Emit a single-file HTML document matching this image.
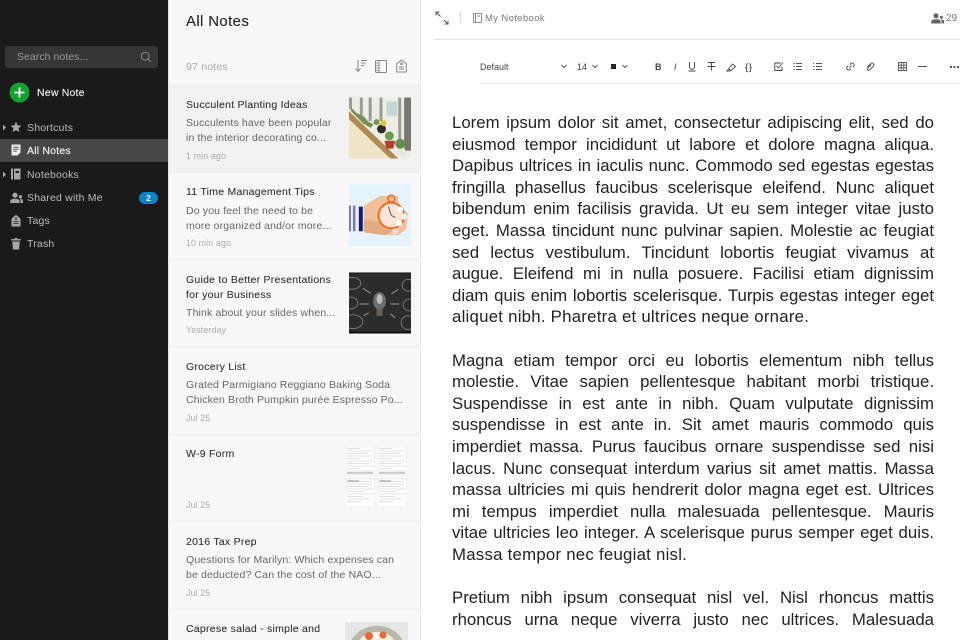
<!DOCTYPE html>
<html><head><meta charset="utf-8"><style>
html,body{margin:0;padding:0;width:960px;height:640px;overflow:hidden;background:#fff;font-family:"Liberation Sans",sans-serif}
.a{position:absolute;white-space:nowrap}
svg{position:absolute;overflow:hidden}
#side{position:absolute;left:0;top:0;width:168px;height:640px;background:#1a1a1a}
#list{position:absolute;left:169px;top:0;width:251px;height:640px;background:#f8f8f8}
.nav{font-size:10.5px;color:#bdbdbd;left:27px;line-height:14px;letter-spacing:.2px;margin-top:1px}
.t{font-size:10.5px;color:#333;left:186px;line-height:14px;letter-spacing:.25px;-webkit-text-stroke:.1px #333;margin-top:1px}
.p{font-size:10.5px;color:#666;left:186px;line-height:14px;letter-spacing:.15px;margin-top:1px}
.d{font-size:8.8px;color:#aaa;left:186px;line-height:12px;letter-spacing:.15px}
.div{position:absolute;left:169px;width:251px;height:1px;background:#ececec}
.l{position:absolute;left:452px;width:482px;height:21.6px;line-height:21.6px;margin-top:1px;font-size:16.8px;color:#222;text-align:justify;text-align-last:justify;overflow:hidden;white-space:normal}
.l.e{text-align-last:left;letter-spacing:.25px}
.tb{font-size:9px;color:#444;line-height:12px}
</style></head><body>
<div id="side"></div>
<div id="list"></div>
<div class="a" style="left:168px;top:0;width:1px;height:640px;background:#e2e2e2"></div>
<div class="a" style="left:420px;top:0;width:1px;height:640px;background:#eaeaea"></div>

<!-- sidebar -->
<div class="a" style="left:5px;top:46px;width:153px;height:22px;border-radius:3px;background:#363636"></div>
<div class="a" style="left:17px;top:50px;font-size:10.5px;line-height:14px;color:#9a9a9a;letter-spacing:.05px">Search notes...</div>
<svg style="left:140px;top:51px" width="12" height="12" viewBox="0 0 12 12" fill="none" stroke="#858585" stroke-width="1.1"><circle cx="5.2" cy="5.2" r="3.9"/><path d="M8 8l3 3"/></svg>
<svg style="left:9px;top:82px" width="21" height="21" viewBox="0 0 21 21"><circle cx="10.5" cy="10.5" r="10" fill="#12a32f"/><path d="M10.5 5.5v10M5.5 10.5h10" stroke="#fff" stroke-width="1.7"/></svg>
<div class="a" style="left:37px;top:86px;font-size:10.5px;line-height:14px;color:#eee;letter-spacing:.2px;-webkit-text-stroke:.15px #eee">New Note</div>

<div class="a" style="left:0;top:139px;width:168px;height:23px;background:#474747"></div>
<svg style="left:2px;top:124px" width="5" height="7" viewBox="0 0 5 7"><path d="M1 .5l3 3-3 3z" fill="#aaa"/></svg>
<svg style="left:2px;top:171px" width="5" height="7" viewBox="0 0 5 7"><path d="M1 .5l3 3-3 3z" fill="#aaa"/></svg>
<svg style="left:10px;top:121px" width="12" height="12" viewBox="0 0 12 12"><path d="M6 .8l1.6 3.5 3.8.4-2.8 2.6.8 3.8L6 9.2l-3.4 1.9.8-3.8L.6 4.700l3.800-.4z" fill="#a5a5a5"/></svg>
<svg style="left:11px;top:144px" width="10" height="12" viewBox="0 0 10 12"><path d="M.5.5h9v8l-3 3h-6z" fill="#eee"/><path d="M2.200 3.200h5.600M2.200 5.200h5.600M2.200 7.200h3.600" stroke="#474747" stroke-width=".9"/></svg>
<svg style="left:11px;top:168px" width="10" height="12" viewBox="0 0 10 12"><path d="M0 .5h2v11H0z" fill="#a5a5a5"/><path d="M3 .5h6.500v11H3z" fill="#a5a5a5"/><path d="M4.500 3h3.500v2H4.500z" fill="#1a1a1a"/></svg>
<svg style="left:10px;top:192px" width="13" height="12" viewBox="0 0 13 12"><circle cx="5" cy="3.200" r="2.600" fill="#a5a5a5"/><path d="M.3 11V8.800C.3 7.500 2 6.700 5 6.700s4.600.8 4.600 2.100V11z" fill="#a5a5a5"/><circle cx="10.400" cy="4.800" r="1.700" fill="#a5a5a5"/><path d="M10.500 11V8.600c0-.7-.2-1.200-.7-1.700 2-.1 3.200.6 3.200 1.800V11z" fill="#a5a5a5"/></svg>
<svg style="left:11px;top:214px" width="10" height="13" viewBox="0 0 10 13"><path d="M5 .8L9.500 4.600v7.900H.5V4.600z" fill="#a5a5a5"/><circle cx="5" cy="4.500" r="1" fill="#1a1a1a"/><path d="M2.500 7.500h5M2.500 9.500h5" stroke="#1a1a1a" stroke-width=".8"/></svg>
<svg style="left:11px;top:237px" width="10" height="13" viewBox="0 0 10 13"><path d="M3.800.8h2.400v1.200h3.500v1.500H.3V2h3.500z" fill="#a5a5a5"/><path d="M1.200 4.500h7.600l-.7 8H1.900z" fill="#a5a5a5"/></svg>
<div class="a nav" style="top:120px">Shortcuts</div>
<div class="a nav" style="top:143px;color:#f2f2f2;-webkit-text-stroke:.15px #f2f2f2">All Notes</div>
<div class="a nav" style="top:167px">Notebooks</div>
<div class="a nav" style="top:190px">Shared with Me</div>
<div class="a nav" style="top:213px">Tags</div>
<div class="a nav" style="top:236px">Trash</div>
<div class="a" style="left:139px;top:192px;width:19px;height:12px;border-radius:6px;background:#0a84c8;color:#fff;font-size:8.5px;font-weight:bold;line-height:12px;text-align:center">2</div>

<!-- list header -->
<div class="a" style="left:186px;top:13px;font-size:15px;line-height:18px;color:#222;letter-spacing:.35px;-webkit-text-stroke:.1px #222">All Notes</div>
<div class="a" style="left:186px;top:60px;font-size:10.5px;line-height:14px;color:#aaa;letter-spacing:.2px">97 notes</div>
<svg style="left:354px;top:59px" width="14" height="14" viewBox="0 0 14 14" fill="none" stroke="#888" stroke-width="1"><path d="M4 1v11M1.500 9.500L4 12.500l2.500-3M7 1.500h6M7 4h4.500M7 6.500h3"/></svg>
<svg style="left:375px;top:60px" width="12" height="13" viewBox="0 0 12 13" fill="none" stroke="#888" stroke-width="1"><rect x=".5" y=".5" width="11" height="12" rx="1"/><path d="M4 .5v12"/><path d="M.5 3h3M.5 5.500h3M.5 8h3M.5 10.500h3" stroke-width=".8"/></svg>
<svg style="left:396px;top:59px" width="11" height="14" viewBox="0 0 11 14" fill="none" stroke="#888" stroke-width="1"><path d="M5.500 1L10.300 4.800V13H.7V4.800z"/><circle cx="5.500" cy="4.800" r=".9"/><path d="M3 8h5M3 10h5"/></svg>

<!-- note rows -->
<div class="a" style="left:169px;top:85px;width:251px;height:87px;background:#f2f2f2"></div>
<div class="div" style="top:84px"></div><div class="div" style="top:172px"></div><div class="div" style="top:259px"></div><div class="div" style="top:346px"></div><div class="div" style="top:434px"></div><div class="div" style="top:521px"></div><div class="div" style="top:609px"></div>

<div class="a t" style="top:97px">Succulent Planting Ideas</div>
<div class="a p" style="top:115px">Succulents have been popular</div>
<div class="a p" style="top:130px">in the interior decorating co...</div>
<div class="a d" style="top:150px">1 min ago</div>

<div class="a t" style="top:184px">11 Time Management Tips</div>
<div class="a p" style="top:203px">Do you feel the need to be</div>
<div class="a p" style="top:218px">more organized and/or more...</div>
<div class="a d" style="top:237px">10 min ago</div>

<div class="a t" style="top:272px">Guide to Better Presentations</div>
<div class="a t" style="top:287px">for your Business</div>
<div class="a p" style="top:305px">Think about your slides when...</div>
<div class="a d" style="top:324px">Yesterday</div>

<div class="a t" style="top:359px">Grocery List</div>
<div class="a p" style="top:377px">Grated Parmigiano Reggiano Baking Soda</div>
<div class="a p" style="top:392px">Chicken Broth Pumpkin purée Espresso Po...</div>
<div class="a d" style="top:412px">Jul 25</div>

<div class="a t" style="top:446px">W-9 Form</div>
<div class="a d" style="top:499px">Jul 25</div>

<div class="a t" style="top:534px">2016 Tax Prep</div>
<div class="a p" style="top:552px">Questions for Marilyn: Which expenses can</div>
<div class="a p" style="top:567px">be deducted? Can the cost of the NAO...</div>
<div class="a d" style="top:587px">Jul 25</div>

<div class="a t" style="top:621px">Caprese salad - simple and</div>

<!-- thumbs -->
<svg style="left:349px;top:97px" width="62" height="62" viewBox="0 0 63 62">
<rect width="63" height="62" fill="#eceee6"/>
<path d="M0 18L46 62H0z" fill="#efe4c8"/>
<path d="M0 0h3v12H0zM11 0h3v18h-3zM20 0h3v24h-3zM31 0h3v24h-3z" fill="#9a9c94"/>
<rect x="38" y="4" width="11" height="15" fill="#c3d8d2"/>
<path d="M50 0h3v44h-3z" fill="#9a9c94"/><rect x="56" y="0" width="7" height="54" fill="#77776e"/>
<path d="M0 14L44 56l6 6h-8L0 22z" fill="#b08a52"/>
<path d="M2 10l6 6 7 3 5 6 5 2-3 4-8-5-6-6-6-6z" fill="#76904e"/>
<circle cx="33" cy="32" r="4.500" fill="#2e2c24"/><circle cx="35" cy="26" r="3" fill="#e3c33a"/><circle cx="28" cy="25" r="3" fill="#6f9450"/>
<path d="M36 44h11l-2 8H38z" fill="#b2402c"/><circle cx="41" cy="39" r="4.500" fill="#6c9a4c"/>
<path d="M49 52h8v7h-8z" fill="#ede7da"/><circle cx="52" cy="47" r="5" fill="#628e4a"/>
</svg>
<svg style="left:349px;top:184px" width="62" height="62" viewBox="0 0 63 63">
<rect width="63" height="63" fill="#e5f4fc"/>
<path d="M0 22h2v26H0zM4 22h2.500v26H4z" fill="#7a78bc"/><path d="M10 23h4v25h-4z" fill="#16167a"/>
<path d="M15 22L32 12h18v10l10 8-2 16-8 6H36l-21-3z" fill="#f0c098"/>
<path d="M15 36l22 4 8 8-9 4-21-3z" fill="#e4aa80"/>
<circle cx="43" cy="32" r="13" fill="#fce4d6" stroke="#ee6a24" stroke-width="2"/>
<circle cx="43" cy="15" r="3.500" fill="none" stroke="#ee6a24" stroke-width="1.600"/>
<path d="M43 32l-3-9M43 32l4 2" stroke="#555" stroke-width="1"/>
<circle cx="52" cy="26" r="3" fill="#fff"/><circle cx="56" cy="33" r="3" fill="#fff"/><circle cx="51" cy="40" r="3" fill="#fff"/><circle cx="47" cy="48" r="3" fill="#fbe1d0"/>
</svg>
<svg style="left:349px;top:272px" width="62" height="62" viewBox="0 0 63 62">
<rect width="63" height="62" fill="#2c2c2c"/><rect width="63" height="1" fill="#111"/><rect y="60" width="63" height="2" fill="#111"/>
<g fill="none" stroke="#777" stroke-width="1"><ellipse cx="3" cy="11" rx="9" ry="6"/><ellipse cx="1" cy="31" rx="8" ry="6"/><ellipse cx="4" cy="50" rx="10" ry="7"/><ellipse cx="60" cy="13" rx="6" ry="6"/><ellipse cx="62" cy="33" rx="7" ry="6"/><ellipse cx="60" cy="51" rx="7" ry="7"/></g>
<g stroke="#9c9c9c" stroke-width="1"><path d="M14 16l8 5M11 32h9M15 44l5-3M43 22l7-5M42 32h9M42 42l5 4"/></g>
<ellipse cx="31" cy="29" rx="6.500" ry="9" fill="#6e6e6e"/><ellipse cx="31" cy="27" rx="3" ry="5" fill="#bdbdbd"/><rect x="28" y="37" width="6" height="7" fill="#6f5f48"/>
</svg>
<svg style="left:345px;top:446px" width="63" height="62" viewBox="0 0 63 62">
<rect width="63" height="62" fill="#f8f8f8"/>
<g fill="#fff" stroke="#e4e4e4" stroke-width=".5"><rect x=".5" y=".5" width="29" height="28"/><rect x="32.500" y=".5" width="29" height="28"/><rect x=".5" y="33" width="29" height="28"/><rect x="32.500" y="33" width="29" height="28"/></g>
<g stroke="#c2c2c2" stroke-width=".6"><path d="M2 2.500h13M2 5h26M2 7.500h20M2 10h26M2 12.500h12M2 15h26M2 17.500h22M2 20h26M2 22.500h14M2 25h26M34 2.500h13M34 5h26M34 7.500h20M34 10h26M34 12.500h12M34 15h26M34 17.500h22M34 20h26M34 22.500h14M34 25h26M2 35.500h26M2 38h26M2 40.500h20M2 43h26M2 45.500h18M2 48h26M2 50.500h16M2 53h24M2 55.500h14M34 35.500h26M34 38h26M34 40.500h20M34 43h26M34 45.500h18M34 48h26M34 50.500h16M34 53h24M34 55.500h14"/></g>
<g stroke="#777" stroke-width=".8"><path d="M2 27h26M34 27h26M2 35h12M34 35h12"/></g>
</svg>
<svg style="left:345px;top:622px" width="63" height="18" viewBox="0 0 63 18">
<rect width="63" height="18" fill="#e6e6e4"/>
<path d="M6.500 18A28 24 0 0 1 57.500 18Z" fill="#b8b8ae"/><path d="M14.500 18A21 18 0 0 1 49.500 18Z" fill="#f4efe6"/>
<circle cx="24" cy="14" r="4" fill="#e86a30"/><circle cx="38" cy="13" r="3.500" fill="#e86a30"/><circle cx="31" cy="14" r="2.500" fill="#fff"/>
</svg>

<!-- editor top -->
<svg style="left:435px;top:11px" width="14" height="14" viewBox="0 0 14 14" fill="none" stroke="#555" stroke-width="1"><path d="M1.500 1.500l4 4M9 9l3.500 3.500"/><path d="M1 4.500V1h3.500M13 9.500V13H9.500"/></svg>
<div class="a" style="left:460px;top:12px;width:1px;height:11px;background:#ddd"></div>
<svg style="left:473px;top:13px" width="9" height="10" viewBox="0 0 9 10" fill="none" stroke="#888" stroke-width=".9"><rect x=".5" y=".5" width="8" height="9"/><path d="M2.500 .5v9M4 3h3"/></svg>
<div class="a" style="left:485px;top:13px;font-size:9.5px;line-height:12px;color:#777;letter-spacing:.35px">My Notebook</div>
<svg style="left:931px;top:13px" width="13" height="11" viewBox="0 0 13 11"><circle cx="5" cy="2.800" r="2.500" fill="#666"/><path d="M.3 10.500V8.300C.3 7 2 6.200 5 6.200s4.600.8 4.600 2.100v2.200z" fill="#666"/><circle cx="10.300" cy="4.300" r="1.500" fill="#666"/><path d="M10.500 10.500V8c0-.7-.2-1.200-.7-1.600 2-.1 3.200.6 3.200 1.700v2.400z" fill="#666"/></svg>
<div class="a" style="left:946px;top:13px;font-size:10px;line-height:12px;color:#777">29</div>
<div class="a" style="left:433px;top:39px;width:527px;height:1px;background:#e4e4e4"></div>
<div class="a" style="left:480px;top:83px;width:480px;height:1px;background:#eaeaea"></div>

<!-- toolbar -->
<div class="a tb" style="left:480px;top:61px">Default</div>
<svg style="left:561px;top:64px" width="6" height="5" viewBox="0 0 6 5" fill="none" stroke="#555"><path d="M.5 1l2.500 2.500L5.500 1"/></svg>
<div class="a tb" style="left:577px;top:61px">14</div>
<svg style="left:592px;top:64px" width="6" height="5" viewBox="0 0 6 5" fill="none" stroke="#555"><path d="M.5 1l2.500 2.500L5.500 1"/></svg>
<div class="a" style="left:611px;top:64px;width:5px;height:5px;background:#222"></div>
<svg style="left:622px;top:64px" width="6" height="5" viewBox="0 0 6 5" fill="none" stroke="#555"><path d="M.5 1l2.500 2.500L5.500 1"/></svg>
<div class="a tb" style="left:655px;top:61px;font-weight:bold">B</div>
<div class="a tb" style="left:674px;top:61px;font-style:italic">I</div>
<svg style="left:688px;top:61px" width="8" height="11" viewBox="0 0 8 11" fill="none" stroke="#444" stroke-width=".9"><path d="M1.500 1v5c0 3 5 3 5 0V1M.5 10h7"/></svg>
<svg style="left:707px;top:61px" width="9" height="11" viewBox="0 0 9 11" fill="none" stroke="#444" stroke-width=".9"><path d="M1 1.500h7M4.500 1.500V9.500M.5 5.500h8"/></svg>
<svg style="left:726px;top:62px" width="10" height="10" viewBox="0 0 10 10" fill="none" stroke="#444" stroke-width=".9"><path d="M2.500 7L6.500 2l3 2.500L5 8.500zM2.500 7L1 9h3l1-.5"/></svg>
<div class="a tb" style="left:745px;top:61px;letter-spacing:1px;-webkit-text-stroke:.2px #444">{}</div>
<svg style="left:774px;top:61px" width="10" height="11" viewBox="0 0 10 11" fill="none" stroke="#444" stroke-width=".9"><path d="M8 5.500V9.500H.8V2h6"/><path d="M2.500 5l1.800 2L9 1.500"/></svg>
<svg style="left:793px;top:62px" width="9" height="9" viewBox="0 0 9 9" stroke="#555" stroke-width=".9"><path d="M3 1.500h6M3 4.500h6M3 7.500h6M.3 1.500h1.400M.3 4.500h1.400M.3 7.500h1.400"/></svg>
<svg style="left:813px;top:62px" width="9" height="9" viewBox="0 0 9 9" stroke="#555" stroke-width=".9"><path d="M3 1.500h6M3 4.500h6M3 7.500h6M.5 1v1.200M.3 4.500h1.400M.3 7.500h1.400"/></svg>
<svg style="left:846px;top:62px" width="9" height="9" viewBox="0 0 9 9" fill="none" stroke="#555" stroke-width="1"><path d="M3.500 5.500l2-2M4 2.500l1-1a2 2 0 012.800 2.800l-1 1M5 6.500l-1 1A2 2 0 011.200 4.700l1-1"/></svg>
<svg style="left:866px;top:62px" width="9" height="9" viewBox="0 0 9 9" fill="none" stroke="#555" stroke-width="1"><path d="M1.500 5l3.500-3.500a1.800 1.800 0 012.500 2.500l-4 4a1.200 1.200 0 01-1.800-1.800l3.500-3.500"/></svg>
<svg style="left:898px;top:62px" width="9" height="9" viewBox="0 0 9 9" fill="none" stroke="#555" stroke-width=".9"><rect x=".5" y=".5" width="8" height="8"/><path d="M3.200 .5v8M5.800 .5v8M.5 3.200h8M.5 5.800h8"/></svg>
<div class="a" style="left:918px;top:66px;width:9px;height:1px;background:#555"></div>
<div class="a" style="left:950px;top:66px;width:2px;height:2px;background:#555;box-shadow:3.500px 0 #555,7px 0 #555"></div>

<!-- editor body -->
<div class="l" style="top:111px">Lorem ipsum dolor sit amet, consectetur adipiscing elit, sed do</div>
<div class="l" style="top:132.600px">eiusmod tempor incididunt ut labore et dolore magna aliqua.</div>
<div class="l" style="top:154.200px">Dapibus ultrices in iaculis nunc. Commodo sed egestas egestas</div>
<div class="l" style="top:175.800px">fringilla phasellus faucibus scelerisque eleifend. Nunc aliquet</div>
<div class="l" style="top:197.400px">bibendum enim facilisis gravida. Ut eu sem integer vitae justo</div>
<div class="l" style="top:219px">eget. Massa tincidunt nunc pulvinar sapien. Molestie ac feugiat</div>
<div class="l" style="top:240.600px">sed lectus vestibulum. Tincidunt lobortis feugiat vivamus at</div>
<div class="l" style="top:262.200px">augue. Eleifend mi in nulla posuere. Facilisi etiam dignissim</div>
<div class="l" style="top:283.800px">diam quis enim lobortis scelerisque. Turpis egestas integer eget</div>
<div class="l e" style="top:305.400px">aliquet nibh. Pharetra et ultrices neque ornare.</div>

<div class="l" style="top:348.600px">Magna etiam tempor orci eu lobortis elementum nibh tellus</div>
<div class="l" style="top:370.200px">molestie. Vitae sapien pellentesque habitant morbi tristique.</div>
<div class="l" style="top:391.800px">Suspendisse in est ante in nibh. Quam vulputate dignissim</div>
<div class="l" style="top:413.400px">suspendisse in est ante in. Sit amet mauris commodo quis</div>
<div class="l" style="top:435px">imperdiet massa. Purus faucibus ornare suspendisse sed nisi</div>
<div class="l" style="top:456.600px">lacus. Nunc consequat interdum varius sit amet mattis. Massa</div>
<div class="l" style="top:478.200px">massa ultricies mi quis hendrerit dolor magna eget est. Ultrices</div>
<div class="l" style="top:499.800px">mi tempus imperdiet nulla malesuada pellentesque. Mauris</div>
<div class="l" style="top:521.400px">vitae ultricies leo integer. A scelerisque purus semper eget duis.</div>
<div class="l e" style="top:543px">Massa tempor nec feugiat nisl.</div>

<div class="l" style="top:586.200px">Pretium nibh ipsum consequat nisl vel. Nisl rhoncus mattis</div>
<div class="l" style="top:607.800px">rhoncus urna neque viverra justo nec ultrices. Malesuada</div>
</body></html>
